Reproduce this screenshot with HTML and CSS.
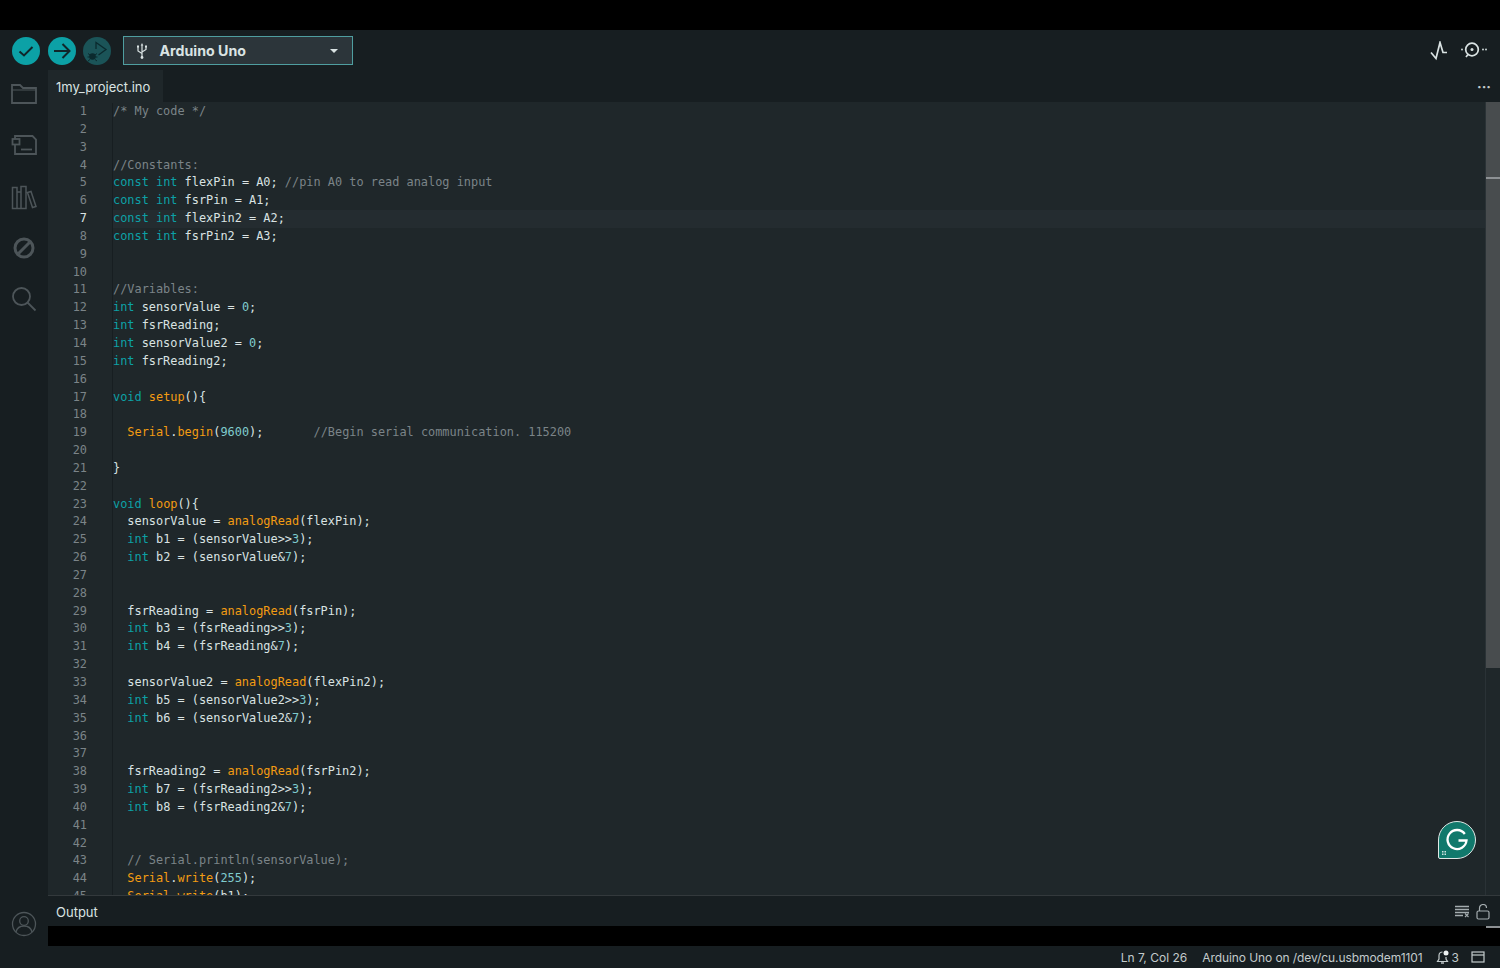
FILE: index.html
```html
<!DOCTYPE html>
<html lang="en">
<head>
    <meta charset="UTF-8">
    <title>my_project | Arduino IDE</title>
    <link rel="stylesheet" href="styles.css">
</head>
<body>
    <div class="titlebar"></div>
    <div class="toolbar">
        <button class="round"><svg width="28" height="28" viewBox="0 0 28 28"><path d="M7.500 14.500l4.500 4 8.500-8.500" fill="none" stroke="#10262a" stroke-width="2"/></svg></button>
        <button class="round"><svg width="28" height="28" viewBox="0 0 28 28"><path d="M6 14h15M14.500 7l7 7-7 7" fill="none" stroke="#10262a" stroke-width="2"/></svg></button>
        <button class="round dim"><svg width="28" height="28" viewBox="0 0 28 28"><path d="M13 12V5.500l10 7-7.500 5.500" fill="none" stroke="#0b2a2e" stroke-width="1.300"/><circle cx="9.500" cy="19.500" r="3.300" fill="#0b2a2e"/><path d="M5 16.500l2 1.500M14 16.500l-2 1.500M4.500 20h2M14.500 20h-2M5 24l2-1.500M14 24l-2-1.500" stroke="#0b2a2e" stroke-width="1"/></svg></button>
        <div class="board">
            <svg class="usb" width="12" height="18" viewBox="0 0 12 18"><path d="M6 3v13M6 11.500L2 9V5M6 10l4-2.500V5" fill="none" stroke="#dae3e3" stroke-width="1.200"/><circle cx="6" cy="15.500" r="1.400" fill="#dae3e3"/><rect x="1" y="3.500" width="2" height="2" fill="#dae3e3"/><rect x="9" y="3.500" width="2" height="2" fill="#dae3e3"/><path d="M6 1l1.300 2.500H4.700z" fill="#dae3e3"/></svg>
            <span class="board-name">Arduino Uno</span>
            <span class="caret"></span>
        </div>
        <div class="toolbar-right">
            <svg width="20" height="20" viewBox="0 0 20 20"><path d="M2 11.500l5 6 4-16 3 10h4" fill="none" stroke="#dae3e3" stroke-width="1.700"/></svg>
            <svg width="26" height="20" viewBox="0 0 26 20"><circle cx="11" cy="8.500" r="6.300" fill="none" stroke="#dae3e3" stroke-width="1.700"/><circle cx="11" cy="8.500" r="1.500" fill="#dae3e3"/><path d="M7 13.500l-2 2.500" stroke="#dae3e3" stroke-width="1.700"/><circle cx="1" cy="8.500" r="0.900" fill="#dae3e3"/><circle cx="22" cy="8.500" r="0.900" fill="#dae3e3"/><circle cx="25" cy="8.500" r="0.900" fill="#dae3e3"/></svg>
        </div>
    </div>
    <div class="main">
        <div class="sidebar">
            <div class="side-icon"><svg width="26" height="22" viewBox="0 0 26 22"><path d="M1 20V2h8l3 3h13v15z" fill="none" stroke="#4d5559" stroke-width="1.800"/><path d="M1 7h24" stroke="#4d5559" stroke-width="1"/></svg></div>
            <div class="side-icon"><svg width="26" height="22" viewBox="0 0 26 22"><path d="M4 5V2h17.500L25 5.500V20H4v-9" fill="none" stroke="#4d5559" stroke-width="1.800"/><rect x="1.500" y="5" width="7" height="5.500" fill="none" stroke="#4d5559" stroke-width="1.800"/><path d="M10 15.500h11" stroke="#4d5559" stroke-width="1.800"/></svg></div>
            <div class="side-icon"><svg width="26" height="26" viewBox="0 0 26 26"><path d="M1.500 3.500H6v21H1.500zM6 8h4v16.500H6zM10 2.500h5v22h-5zM16.500 8.500l3.500-1 5 15-3.500 1z" fill="none" stroke="#4d5559" stroke-width="1.500"/></svg></div>
            <div class="side-icon"><svg width="24" height="24" viewBox="0 0 24 24"><circle cx="12" cy="12" r="9" fill="none" stroke="#4d5559" stroke-width="3"/><path d="M6.500 17.500l11-11" stroke="#4d5559" stroke-width="3"/></svg></div>
            <div class="side-icon"><svg width="26" height="26" viewBox="0 0 26 26"><circle cx="10.500" cy="10.500" r="8.500" fill="none" stroke="#4d5559" stroke-width="1.800"/><path d="M16.500 16.500l8 8" stroke="#4d5559" stroke-width="1.800"/></svg></div>
            <div class="side-icon user"><svg width="26" height="26" viewBox="0 0 26 26"><circle cx="13" cy="13" r="11.500" fill="none" stroke="#4d5559" stroke-width="1.300"/><circle cx="13" cy="10" r="4.300" fill="none" stroke="#4d5559" stroke-width="1.300"/><path d="M5 21c1-4 4-6 8-6s7 2 8 6" fill="none" stroke="#4d5559" stroke-width="1.300"/></svg></div>
        </div>
        <div class="center">
            <div class="tabs">
                <div class="tab">1my_project.ino</div>
                <div class="tab-more">···</div>
            </div>
            <div class="editor">
                <div class="code">
                    <div class="row"><span class="ln">1</span><span class="src"><span class="c">/* My code */</span></span></div>
                    <div class="row"><span class="ln">2</span><span class="src"></span></div>
                    <div class="row"><span class="ln">3</span><span class="src"></span></div>
                    <div class="row"><span class="ln">4</span><span class="src"><span class="c">//Constants:</span></span></div>
                    <div class="row"><span class="ln">5</span><span class="src"><span class="k">const</span> <span class="k">int</span> flexPin = A0; <span class="c">//pin A0 to read analog input</span></span></div>
                    <div class="row"><span class="ln">6</span><span class="src"><span class="k">const</span> <span class="k">int</span> fsrPin = A1;</span></div>
                    <div class="row current"><span class="ln">7</span><span class="src"><span class="k">const</span> <span class="k">int</span> flexPin2 = A2;</span></div>
                    <div class="row"><span class="ln">8</span><span class="src"><span class="k">const</span> <span class="k">int</span> fsrPin2 = A3;</span></div>
                    <div class="row"><span class="ln">9</span><span class="src"></span></div>
                    <div class="row"><span class="ln">10</span><span class="src"></span></div>
                    <div class="row"><span class="ln">11</span><span class="src"><span class="c">//Variables:</span></span></div>
                    <div class="row"><span class="ln">12</span><span class="src"><span class="k">int</span> sensorValue = <span class="n">0</span>;</span></div>
                    <div class="row"><span class="ln">13</span><span class="src"><span class="k">int</span> fsrReading;</span></div>
                    <div class="row"><span class="ln">14</span><span class="src"><span class="k">int</span> sensorValue2 = <span class="n">0</span>;</span></div>
                    <div class="row"><span class="ln">15</span><span class="src"><span class="k">int</span> fsrReading2;</span></div>
                    <div class="row"><span class="ln">16</span><span class="src"></span></div>
                    <div class="row"><span class="ln">17</span><span class="src"><span class="k">void</span> <span class="f">setup</span>(){</span></div>
                    <div class="row"><span class="ln">18</span><span class="src"></span></div>
                    <div class="row"><span class="ln">19</span><span class="src">  <span class="f">Serial</span>.<span class="f">begin</span>(<span class="n">9600</span>);       <span class="c">//Begin serial communication. 115200</span></span></div>
                    <div class="row"><span class="ln">20</span><span class="src"></span></div>
                    <div class="row"><span class="ln">21</span><span class="src">}</span></div>
                    <div class="row"><span class="ln">22</span><span class="src"></span></div>
                    <div class="row"><span class="ln">23</span><span class="src"><span class="k">void</span> <span class="f">loop</span>(){</span></div>
                    <div class="row"><span class="ln">24</span><span class="src">  sensorValue = <span class="f">analogRead</span>(flexPin);</span></div>
                    <div class="row"><span class="ln">25</span><span class="src">  <span class="k">int</span> b1 = (sensorValue&gt;&gt;<span class="n">3</span>);</span></div>
                    <div class="row"><span class="ln">26</span><span class="src">  <span class="k">int</span> b2 = (sensorValue&amp;<span class="n">7</span>);</span></div>
                    <div class="row"><span class="ln">27</span><span class="src"></span></div>
                    <div class="row"><span class="ln">28</span><span class="src"></span></div>
                    <div class="row"><span class="ln">29</span><span class="src">  fsrReading = <span class="f">analogRead</span>(fsrPin);</span></div>
                    <div class="row"><span class="ln">30</span><span class="src">  <span class="k">int</span> b3 = (fsrReading&gt;&gt;<span class="n">3</span>);</span></div>
                    <div class="row"><span class="ln">31</span><span class="src">  <span class="k">int</span> b4 = (fsrReading&amp;<span class="n">7</span>);</span></div>
                    <div class="row"><span class="ln">32</span><span class="src"></span></div>
                    <div class="row"><span class="ln">33</span><span class="src">  sensorValue2 = <span class="f">analogRead</span>(flexPin2);</span></div>
                    <div class="row"><span class="ln">34</span><span class="src">  <span class="k">int</span> b5 = (sensorValue2&gt;&gt;<span class="n">3</span>);</span></div>
                    <div class="row"><span class="ln">35</span><span class="src">  <span class="k">int</span> b6 = (sensorValue2&amp;<span class="n">7</span>);</span></div>
                    <div class="row"><span class="ln">36</span><span class="src"></span></div>
                    <div class="row"><span class="ln">37</span><span class="src"></span></div>
                    <div class="row"><span class="ln">38</span><span class="src">  fsrReading2 = <span class="f">analogRead</span>(fsrPin2);</span></div>
                    <div class="row"><span class="ln">39</span><span class="src">  <span class="k">int</span> b7 = (fsrReading2&gt;&gt;<span class="n">3</span>);</span></div>
                    <div class="row"><span class="ln">40</span><span class="src">  <span class="k">int</span> b8 = (fsrReading2&amp;<span class="n">7</span>);</span></div>
                    <div class="row"><span class="ln">41</span><span class="src"></span></div>
                    <div class="row"><span class="ln">42</span><span class="src"></span></div>
                    <div class="row"><span class="ln">43</span><span class="src">  <span class="c">// Serial.println(sensorValue);</span></span></div>
                    <div class="row"><span class="ln">44</span><span class="src">  <span class="f">Serial</span>.<span class="f">write</span>(<span class="n">255</span>);</span></div>
                    <div class="row"><span class="ln">45</span><span class="src">  <span class="f">Serial</span>.<span class="f">write</span>(b1);</span></div>
                </div>
                <div class="scrollbar">
                    <div class="thumb"><div class="mark"></div></div>
                </div>
                <div class="grammarly">
                    <svg width="38" height="38" viewBox="0 0 38 38"><path d="M19 .5a18.500 18.500 0 0 1 0 37H2a1.500 1.500 0 0 1-1.500-1.500V19A18.500 18.500 0 0 1 19 .5z" fill="#11796c" stroke="#dfe8e6"/><path d="M26.800 13a9.500 9.500 0 1 0 1.700 6.500h-8" fill="none" stroke="#fff" stroke-width="2.300"/><path d="M4 30h1.500v1.500H4zM6.500 30H8v1.500H6.500zM4 32.500h1.500V34H4zM6.500 32.500H8V34H6.500z" fill="#cfe3df"/></svg>
                </div>
            </div>
            <div class="output">
                <div class="output-head">
                    <div class="output-tab">Output</div>
                    <div class="output-tools">
                        <svg width="15" height="14" viewBox="0 0 15 14"><path d="M0 1.500h14M0 4.500h14M0 7.500h14M0 10.500h8" stroke="#a4acaf" stroke-width="1.300"/><path d="M10 8.500l3.500 3.500M13.500 8.500L10 12" stroke="#a4acaf" stroke-width="1.100"/></svg>
                        <svg width="14" height="16" viewBox="0 0 14 16"><rect x="1" y="7" width="12" height="8" rx="1.500" fill="none" stroke="#a4acaf" stroke-width="1.200"/><path d="M3.500 7V4a3.500 3.500 0 0 1 7 0" fill="none" stroke="#a4acaf" stroke-width="1.200"/></svg>
                    </div>
                </div>
                <div class="output-body"><div class="output-mark"></div></div>
            </div>
        </div>
    </div>
    <div class="statusbar">
        <span class="pos">Ln 7, Col 26</span>
        <span class="port">Arduino Uno on /dev/cu.usbmodem1101</span>
        <span class="notif"><svg width="14" height="15" viewBox="0 0 14 15"><path d="M6.500 2A3.500 3.500 0 0 0 3 5.500V9l-1.500 2.500h10L10 9V7" fill="none" stroke="#c3cbcc" stroke-width="1.200"/><path d="M5 13h3" stroke="#c3cbcc" stroke-width="1.400"/><circle cx="10" cy="3" r="2.500" fill="#eef2f2"/></svg>3</span>
        <svg width="14" height="14" viewBox="0 0 14 14"><rect x="1" y="2" width="12" height="10" fill="none" stroke="#c3cbcc" stroke-width="1.200"/><path d="M1 5h12" stroke="#c3cbcc" stroke-width="1.200"/></svg>
    </div>
</body>
</html>
```
FILE: styles.css
```css
* {
    box-sizing: border-box;
    padding: 0;
    margin: 0;
}

html, body {
    height: 968px;
    overflow: hidden;
}

body {
    display: flex;
    flex-direction: column;
    font-family: "Inter", "Open Sans", sans-serif;
    background-color: #171e21;
    color: #dae3e3;
}

.titlebar {
    height: 30px;
    background-color: #000;
}

/* toolbar */
.toolbar {
    height: 40px;
    display: flex;
    align-items: center;
    padding: 1px 0 0 12px;
    background-color: #171e21;
}

.round {
    width: 28px;
    height: 28px;
    margin-right: 7.5px;
    border: none;
    border-radius: 50%;
    background-color: #0ca1a6;
    display: flex;
}

.round.dim {
    background-color: #1b5458;
}

.board {
    width: 230px;
    height: 29px;
    margin-left: 4px;
    padding: 0 14px 0 12px;
    display: flex;
    align-items: center;
    background-color: #2c353a;
    border: 1px solid #4f9ea0;
}

.board-name {
    margin-left: 12px;
    font-size: 14.2px;
    font-weight: 700;
}

.caret {
    margin-left: auto;
    border-left: 4px solid transparent;
    border-right: 4px solid transparent;
    border-top: 4px solid #dae3e3;
}

.toolbar-right {
    margin-left: auto;
    margin-right: 13px;
    display: flex;
    align-items: center;
    gap: 12px;
}

/* main area */
.main {
    flex: 1;
    min-height: 0;
    display: flex;
}

.sidebar {
    width: 48px;
    display: flex;
    flex-direction: column;
    gap: 3.3px;
}

.side-icon {
    height: 48px;
    display: flex;
    align-items: center;
    justify-content: center;
}

.side-icon.user {
    margin-top: auto;
    height: 44px;
}

.center {
    flex: 1;
    min-width: 0;
    display: flex;
    flex-direction: column;
}

.tabs {
    height: 32px;
    display: flex;
    align-items: center;
}

.tab {
    width: 115px;
    height: 32px;
    padding-left: 8px;
    line-height: 34px;
    font-size: 13px;
    background-color: #1f272a;
}

.tab-more {
    margin-left: auto;
    margin-right: 9px;
    font-size: 14px;
    font-weight: 700;
    color: #c3cbcc;
}

/* editor */
.editor {
    position: relative;
    flex: 1;
    min-height: 0;
    display: flex;
    overflow: hidden;
    background-color: #1f272a;
}

.code {
    flex: 1;
    min-width: 0;
    padding-top: 1px;
    font-family: "DejaVu Sans Mono", monospace;
    font-size: 11.9px;
}

.row {
    height: 17.85px;
    line-height: 17.85px;
    display: flex;
}

.ln {
    width: 39px;
    margin-right: 26px;
    flex-shrink: 0;
    text-align: right;
    color: #7b8488;
}

.src {
    flex: 1;
    white-space: pre;
    box-shadow: -1px 0 0 #171e21;
}

.current .ln {
    color: #dae3e3;
}

.current .src {
    background-color: #242c30;
}

.k {
    color: #0ca1a6;
}

.f {
    color: #f39c12;
}

.n {
    color: #7fcbcd;
}

.c {
    color: #7b8488;
}

.scrollbar {
    width: 14px;
    background-color: #1f272a;
    box-shadow: -1px 0 0 #2a3236;
}

.thumb {
    height: 566px;
    padding-top: 75px;
    background-color: #484c4e;
}

.mark {
    height: 2px;
    background-color: #8d9194;
}

.grammarly {
    position: absolute;
    right: 24px;
    bottom: 36px;
    width: 38px;
    height: 38px;
}

/* output */
.output {
    height: 51px;
    display: flex;
    flex-direction: column;
    border-top: 1px solid #33393c;
}

.output-head {
    height: 30px;
    display: flex;
    align-items: center;
    padding: 1px 10px 0 8px;
}

.output-tab {
    font-size: 13px;
}

.output-tools {
    margin-left: auto;
    display: flex;
    align-items: center;
    gap: 6px;
}

.output-body {
    height: 20px;
    background-color: #000;
}

.output-mark {
    width: 14px;
    height: 2px;
    margin-left: auto;
    background-color: #8d9194;
}

/* status bar */
.statusbar {
    height: 22px;
    display: flex;
    align-items: center;
    justify-content: flex-end;
    padding-right: 15px;
    font-size: 12px;
    color: #c3cbcc;
}

.pos {
    margin-right: 15px;
}

.port {
    margin-right: 13px;
    letter-spacing: -0.08px;
}

.notif {
    display: flex;
    align-items: center;
    gap: 2px;
    margin-right: 12px;
}
```
